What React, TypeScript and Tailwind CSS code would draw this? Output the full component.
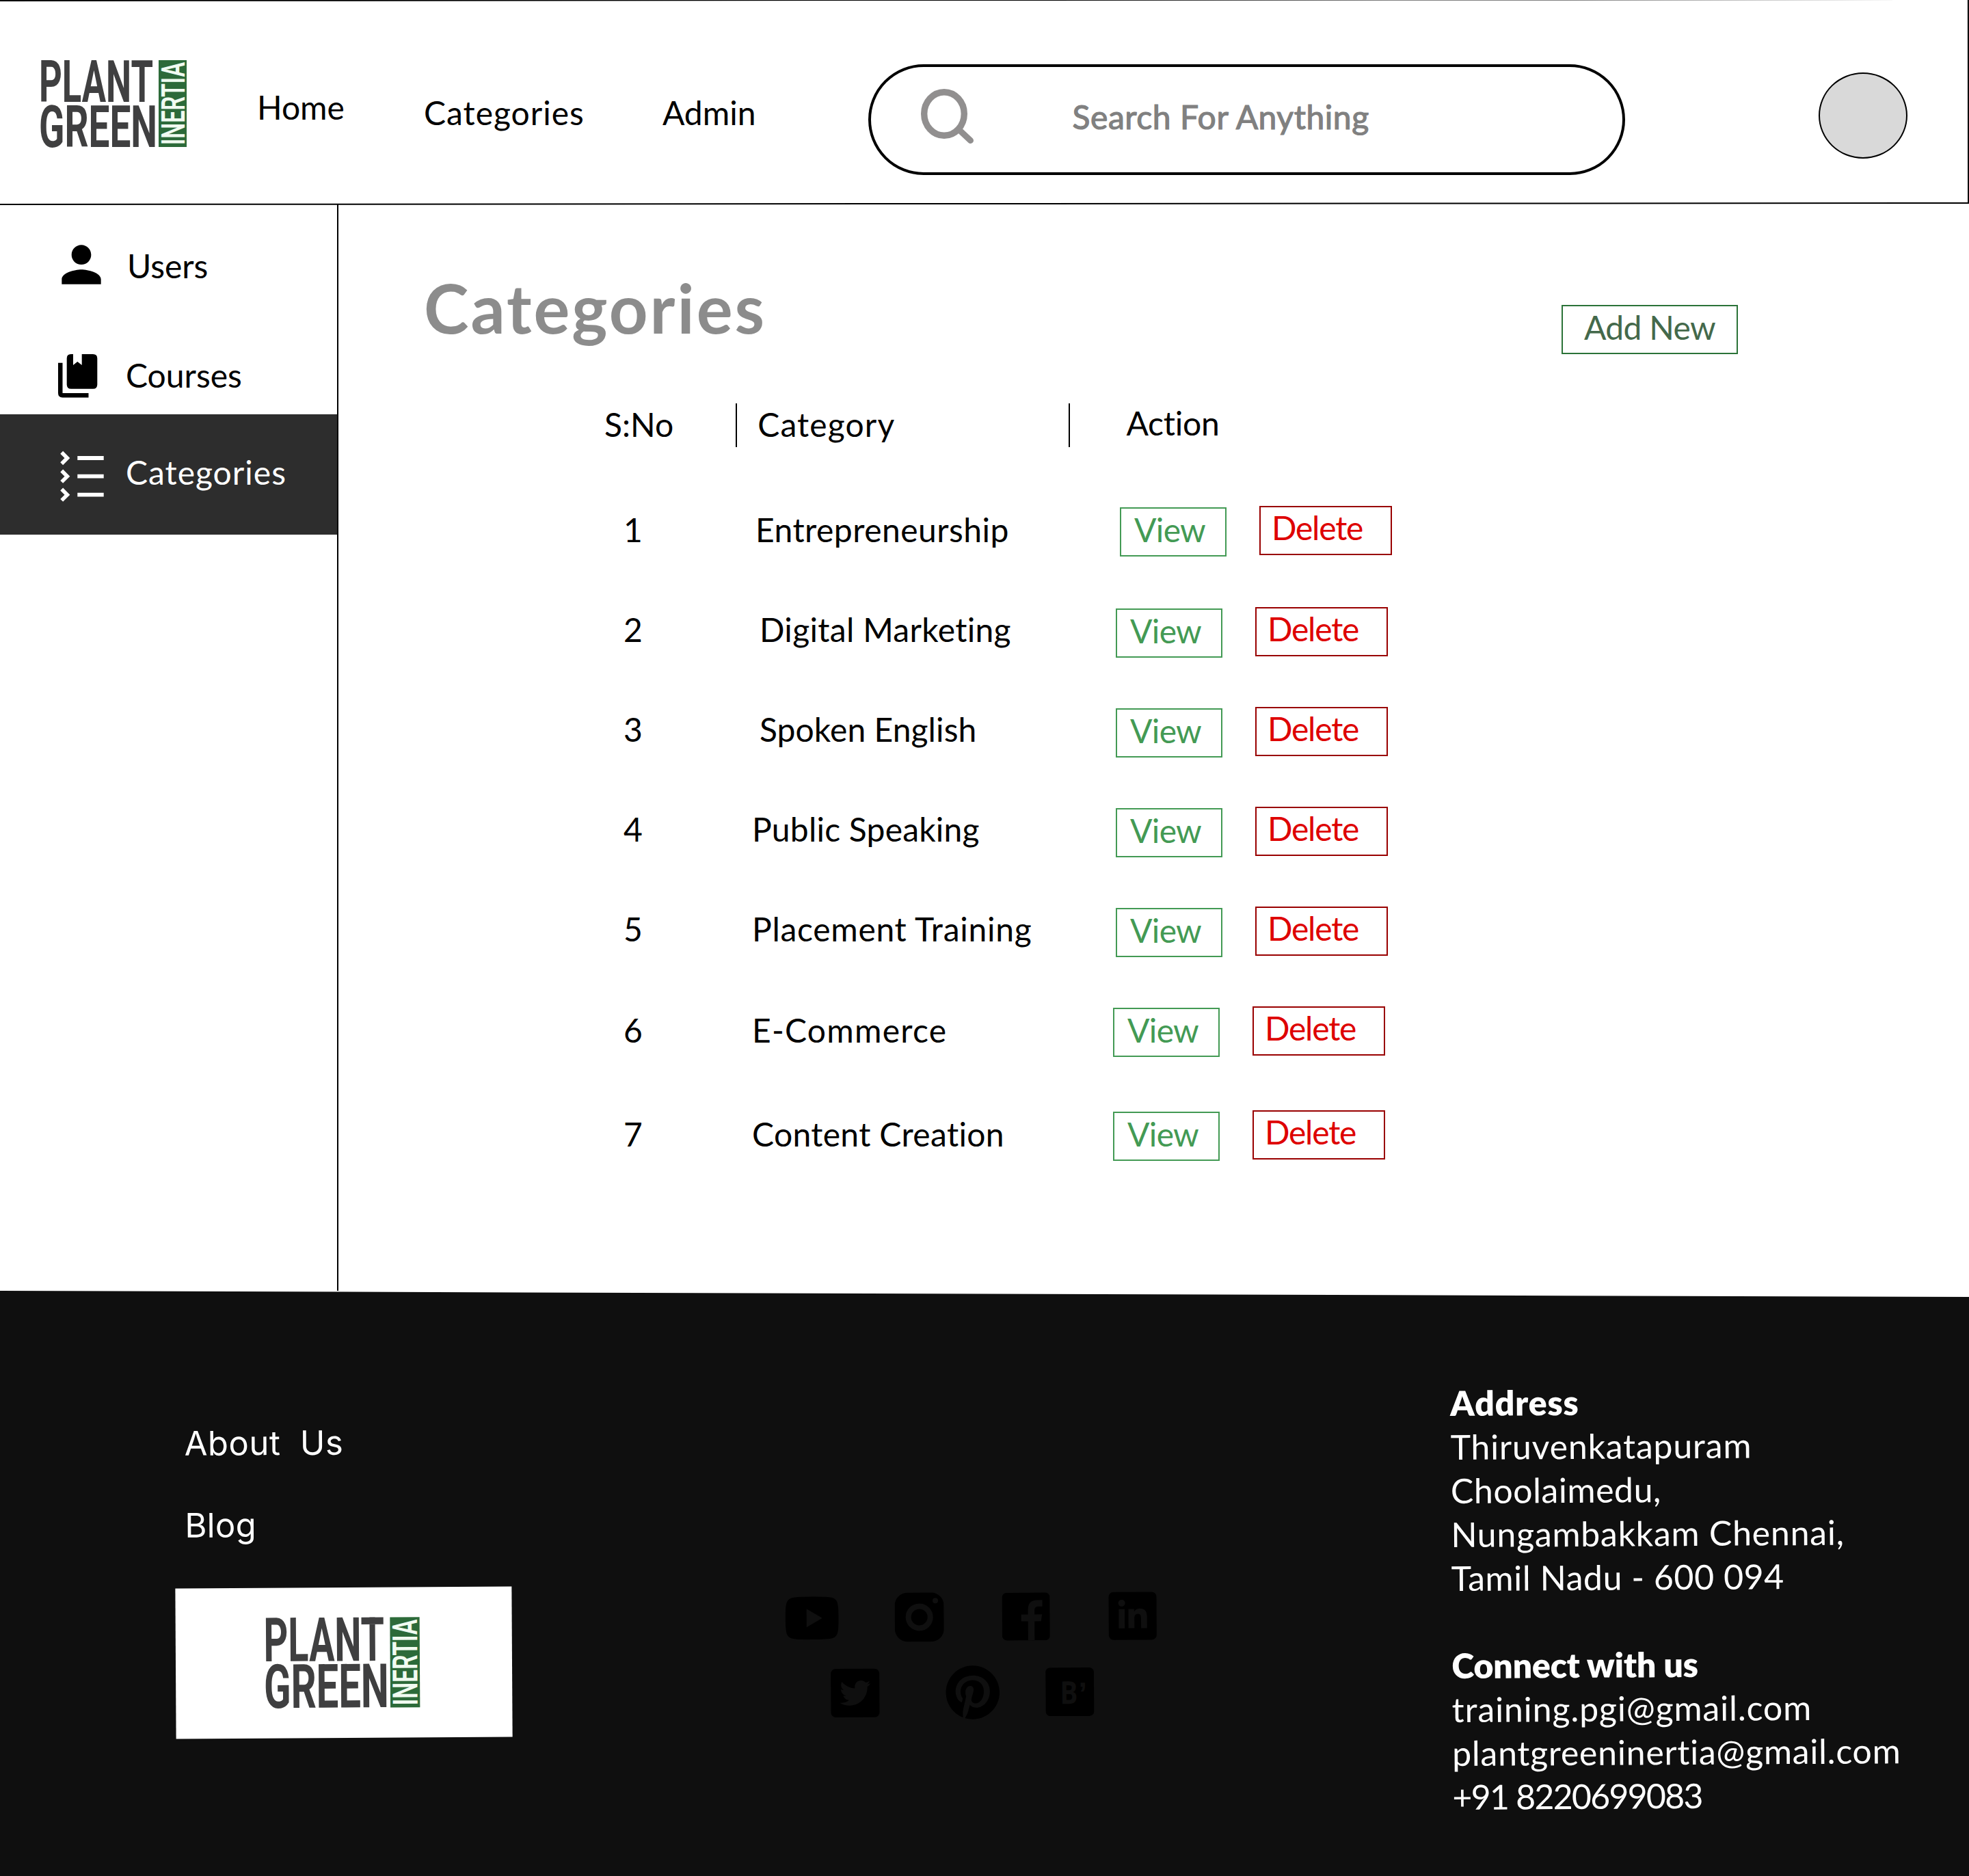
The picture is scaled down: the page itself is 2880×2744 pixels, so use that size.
import { useLayoutEffect, useRef, useState } from "react";
import { FaLinkedinIn, FaPinterest, FaTwitter } from "react-icons/fa";
import { MdPerson } from "react-icons/md";

type LineProps = { w: number; children: string; className?: string; box?: string };

/** Single line of text tracked out (or in) so that it spans `w` pixels. */
function Line({ w, children, className = "", box = "h-[60px] leading-[62px]" }: LineProps) {
  const ref = useRef<HTMLSpanElement>(null);
  const [spacing, setSpacing] = useState(0);
  useLayoutEffect(() => {
    const el = ref.current;
    if (!el || children.length < 2) return;
    setSpacing((w - el.offsetWidth) / (children.length - 1));
  }, []);
  return (
    <span className={`block whitespace-pre ${box} ${className}`}>
      <span ref={ref} className="inline-block" style={{ letterSpacing: spacing }}>
        {children}
      </span>
    </span>
  );
}

function Logo({ className }: { className: string }) {
  return (
    <svg viewBox="0 0 213 127" className={`overflow-visible ${className}`} preserveAspectRatio="none">
      <g fontFamily="Roboto" fontWeight="700" fontSize="86" fill="#3f3f40">
        <text x="-3" y="61" textLength="167" lengthAdjust="spacingAndGlyphs">PLANT</text>
        <text x="-3" y="126.5" textLength="173" lengthAdjust="spacingAndGlyphs">GREEN</text>
      </g>
      <rect x="172" y="0" width="41" height="127" fill="#2c6a39" />
      <text
        transform="translate(209.5 124) rotate(-90)"
        fontFamily="Roboto"
        fontWeight="600"
        fontSize="48"
        fill="#f1fbf1"
        textLength="121"
        lengthAdjust="spacingAndGlyphs"
      >
        INERTIA
      </text>
    </svg>
  );
}

function Header() {
  return (
    <header className="relative flex h-[299px]">
      <div className="absolute inset-x-0 top-0 h-[301px] overflow-hidden">
        <div className="-mt-px -ml-1 h-[300px] w-[2884px] -rotate-[0.04deg] border-2 border-black" />
      </div>
      <Logo className="mt-[88px] ml-[60px] h-[127px] w-[213px]" />
      <nav className="flex">
        <Line w={128} className="mt-[126px] ml-[103px]">Home</Line>
        <Line w={234} className="mt-[134px] ml-[116px]">Categories</Line>
        <Line w={137} className="mt-[134px] ml-[114px]">Admin</Line>
      </nav>
      <div className="mt-[94px] ml-[164px] flex h-[162px] w-[1107px] shrink-0 rounded-full border-4 border-black">
        <svg viewBox="0 0 80 82" className="mt-[31px] ml-[71px] h-[82px] w-[80px]" fill="none" stroke="#918f8f">
          <ellipse cx="36" cy="37.5" rx="29.3" ry="31.8" strokeWidth="9.4" />
          <path d="M58 61 L74.5 76.500" strokeWidth="9" strokeLinecap="round" />
        </svg>
        <Line w={434} className="mt-[42px] ml-[144px] text-[#808080] [-webkit-text-stroke:1.2px_#808080]">
          Search For Anything
        </Line>
      </div>
      <div className="mt-[106px] ml-[283px] h-[126px] w-[130px] shrink-0 rounded-[50%] border-2 border-black bg-[#d9d9d9]" />
    </header>
  );
}

function Sidebar() {
  return (
    <aside className="w-[495px] shrink-0 border-r-2 border-black">
      <div className="flex h-[170px]">
        <MdPerson className="mt-[45px] ml-[76px] size-[86px]" />
        <Line w={118} className="mt-[59px] ml-[24px]">Users</Line>
      </div>
      <div className="flex h-[137px]">
        <svg viewBox="0 0 58 64" className="mt-[49px] ml-[85px] h-[64px] w-[58px]">
          <path d="M0 12.700H6.500V57H44.500V63.400H6.500Q0 63.400 0 57Z" />
          <path d="M18.700 0H22V16L28.300 11L34.700 16V0H51Q57.300 0 57.300 6.300V44.400Q57.300 50.700 51 50.700H19Q12.700 50.700 12.700 44.400V6.300Q12.700 0 18.700 0Z" />
        </svg>
        <Line w={170} className="mt-[49px] ml-[41px]">Courses</Line>
      </div>
      <div className="flex h-[176px] w-[493px] bg-[#2d2d2d] text-white">
        <svg viewBox="0 0 66 78" className="mt-[52px] ml-[87px] h-[78px] w-[66px]" fill="none" stroke="white">
          {[12, 38.7, 65.7].map((y) => (
            <g key={y} transform={`translate(0 ${y})`}>
              <path d="M3.200 -8.200L11.400 0L3.200 8.200" strokeWidth="5.500" />
              <path d="M26.300 0H64.700" strokeWidth="5.800" />
            </g>
          ))}
        </svg>
        <Line w={234} className="mt-[54px] ml-[31px]">Categories</Line>
      </div>
    </aside>
  );
}

const rows = [
  { n: "1", name: "Entrepreneurship", w: 370, row: "h-[148px]", text: "mt-[4px]", indent: "ml-[5px]", actions: "ml-[10px]" },
  { n: "2", name: "Digital Marketing", w: 368, row: "h-[146px]", text: "mt-[2px]", indent: "ml-[11px]", actions: "ml-[4px]" },
  { n: "3", name: "Spoken English", w: 317, row: "h-[146px]", text: "mt-[2px]", indent: "ml-[11px]", actions: "ml-[4px]" },
  { n: "4", name: "Public Speaking", w: 333, row: "h-[146px]", text: "mt-[2px]", indent: "ml-0", actions: "ml-[4px]" },
  { n: "5", name: "Placement Training", w: 409, row: "h-[146px]", text: "mt-[2px]", indent: "ml-0", actions: "ml-[4px]" },
  { n: "6", name: "E-Commerce", w: 284, row: "h-[152px]", text: "mt-[4px]", indent: "ml-0", actions: "ml-0" },
  { n: "7", name: "Content Creation", w: 370, row: "h-[146px]", text: "mt-[4px]", indent: "ml-0", actions: "ml-0" },
];

function Main() {
  return (
    <main className="flex-1">
      <div className="flex h-[291px]">
        <h1 className="mt-[91px] ml-[125px] w-[510px] text-[99px] font-bold text-[#8c8c8c]">
          <Line w={498} box="h-[120px] leading-[120px]">Categories</Line>
        </h1>
        <button className="mt-[147px] ml-[1154px] flex h-[72px] w-[258px] border-2 border-[#2b7338] pl-[31px] text-[#44694b]">
          <Line w={193}>Add New</Line>
        </button>
      </div>
      <div className="flex h-[150px]">
        <Line w={101} className="ml-[389px]">S:No</Line>
        <div className="ml-[91px] h-[64px] w-[2px] bg-black" />
        <Line w={200} className="ml-[30px]">Category</Line>
        <div className="ml-[254px] h-[64px] w-[2px] bg-black" />
        <Line w={137} className="-mt-[2px] ml-[82px]">Action</Line>
      </div>
      {rows.map((r) => (
        <div key={r.n} className={`grid grid-cols-[188px_528px_1fr] pl-[417px] ${r.row}`}>
          <Line w={27} className={r.text}>{r.n}</Line>
          <div className={r.indent}>
            <Line w={r.w} className={r.text}>{r.name}</Line>
          </div>
          <div className={`flex gap-[48px] ${r.actions}`}>
            <button className="mt-[2px] flex h-[72px] w-[156px] border-2 border-[#439a54] pl-[19px] text-[#439a54]">
              <Line w={105}>View</Line>
            </button>
            <button className="flex h-[72px] w-[194px] border-2 border-[#990000] pl-[16px] text-[#de0000]">
              <Line w={134} className="-mt-px">Delete</Line>
            </button>
          </div>
        </div>
      ))}
    </main>
  );
}

function Socials() {
  return (
    <div className="w-[580px] -rotate-[0.33deg]">
      <div className="flex h-[110px] items-center">
        <svg viewBox="0 0 78 63" className="ml-[29px] h-[63px] w-[78px] shrink-0">
          <path d="M39 0Q62 0 69 2Q76 4 77 13Q78 20 78 31.500Q78 43 77 50Q76 59 69 61Q62 63 39 63Q16 63 9 61Q2 59 1 50Q0 43 0 31.500Q0 20 1 13Q2 4 9 2Q16 0 39 0Z" />
          <path d="M31 18L54 31.500L31 45Z" fill="#0f0f0f" />
        </svg>
        <svg viewBox="0 0 72 72" className="ml-[82px] size-[72px] shrink-0">
          <rect width="72" height="72" rx="19" />
          <circle cx="36" cy="36" r="16" fill="none" stroke="#0f0f0f" strokeWidth="8" />
          <circle cx="59.500" cy="12" r="4" fill="#0f0f0f" />
        </svg>
        <svg viewBox="0 0 70 70" className="ml-[85px] size-[70px] shrink-0">
          <rect width="70" height="70" rx="7" />
          <path
            d="M38 70V42H28V32H38V25Q38 11 51 11H59V20.500H53Q47.500 20.500 47.500 26V32H58.500L57 42H47.500V70Z"
            fill="#0f0f0f"
          />
        </svg>
        <div className="ml-[86px] flex size-[70px] shrink-0 items-center justify-center rounded-[7px] bg-black text-[#0f0f0f]">
          <FaLinkedinIn className="size-[48px]" />
        </div>
      </div>
      <div className="flex h-[110px] items-center">
        <div className="ml-[95px] flex size-[71px] shrink-0 items-center justify-center rounded-[7px] bg-black text-[#0f0f0f]">
          <FaTwitter className="size-[45px]" />
        </div>
        <FaPinterest className="ml-[96px] size-[81px] shrink-0 text-black" />
        <svg viewBox="0 0 71 71" className="ml-[66px] size-[71px] shrink-0">
          <rect width="71" height="71" rx="7" />
          <g fill="#0f0f0f" fontWeight="700" fontSize="46">
            <text x="21" y="53" fontFamily="Open Sans" textLength="26" lengthAdjust="spacingAndGlyphs">B</text>
            <text x="48" y="54" fontFamily="Liberation Sans">’</text>
          </g>
        </svg>
      </div>
    </div>
  );
}

const addressBox = "h-[64px] leading-[64px]";

function Footer() {
  return (
    <footer className="flex h-[856px] bg-[#0f0f0f] text-white [clip-path:polygon(0_0,100%_9px,100%_100%,0_100%)]">
      <div className="w-[1120px] pl-[257px]">
        <div className="mt-[193px] ml-[13px] w-[300px] -rotate-[0.33deg] font-['Inter'] text-[49px]">
          <Line w={232} box="h-[60px] leading-[60px]">About  Us</Line>
          <Line w={104} box="h-[60px] leading-[60px]" className="mt-[60px]">Blog</Line>
        </div>
        <div className="mt-[61px] h-[220px] w-[492px] -rotate-[0.33deg] bg-white">
          <Logo className="h-[176px] w-[357px] pt-[44px] pl-[132px]" />
        </div>
      </div>
      <div className="mt-[422px] w-[999px]">
        <Socials />
      </div>
      <address className="mt-[132px] ml-[2px] w-[660px] origin-top-left -rotate-[0.33deg] text-[50px] not-italic">
        <Line w={188} box={addressBox} className="font-extrabold">Address</Line>
        <Line w={440} box={addressBox}>Thiruvenkatapuram</Line>
        <Line w={307} box={addressBox}>Choolaimedu,</Line>
        <Line w={575} box={addressBox}>Nungambakkam Chennai,</Line>
        <Line w={487} box={addressBox}>Tamil Nadu - 600 094</Line>
        <Line w={361} box={addressBox} className="mt-[64px] font-extrabold">Connect with us</Line>
        <Line w={526} box={addressBox}>training.pgi@gmail.com</Line>
        <Line w={656} box={addressBox}>plantgreeninertia@gmail.com</Line>
        <Line w={367} box={addressBox}>+91 8220699083</Line>
      </address>
    </footer>
  );
}

export default function App() {
  return (
    <div className="w-[2880px] overflow-hidden bg-white font-['Lato',sans-serif] text-[48px] text-black">
      <Header />
      <div className="flex h-[1589px]">
        <Sidebar />
        <Main />
      </div>
      <Footer />
    </div>
  );
}
